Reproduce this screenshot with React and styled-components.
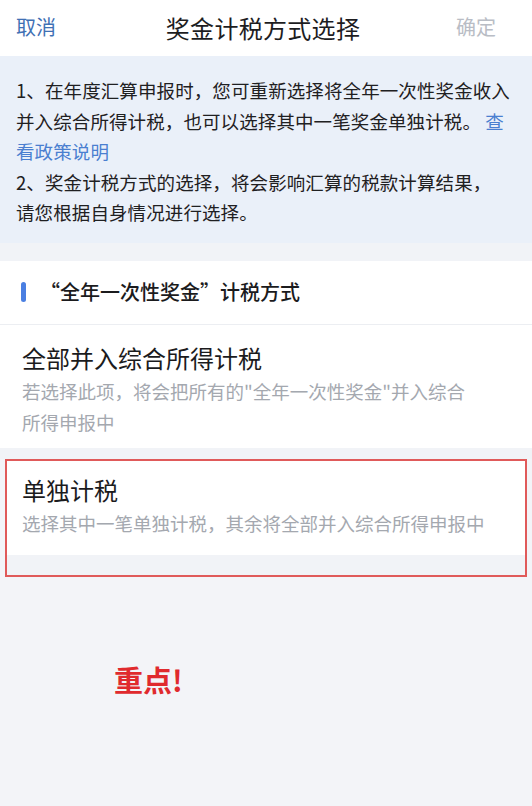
import React from 'react';
import styled, { createGlobalStyle } from 'styled-components';

const GlobalStyle = createGlobalStyle`
  html, body {
    margin: 0;
    padding: 0;
    background: #f3f4f8;
  }
  body {
    font-family: "Noto Sans CJK SC", "Noto Sans", sans-serif;
    -webkit-font-smoothing: antialiased;
  }
`;

const Page = styled.div`
  width: 532px;
  min-height: 806px;
  background: #f3f4f8;
  display: flex;
  flex-direction: column;
`;

const Header = styled.header`
  height: 56px;
  background: #ffffff;
  display: grid;
  grid-template-columns: 1fr auto 1fr;
  align-items: center;
  padding: 0 16px;
  box-sizing: border-box;
`;

const HeaderButton = styled.span`
  font-size: 20px;
  line-height: 28px;
  color: ${(p) => (p.$muted ? '#b9bdc5' : '#3f70b4')};
  justify-self: ${(p) => (p.$right ? 'end' : 'start')};
  padding-right: ${(p) => (p.$right ? '20px' : '0')};
  margin-top: -2px;
`;

const Title = styled.h1`
  margin: 0;
  font-size: 24px;
  line-height: 30px;
  font-weight: 400;
  color: #1d1d1f;
  padding-right: 6px;
  letter-spacing: 0.3px;
`;

const Notice = styled.section`
  background: #eaf0f9;
  padding: 19px 10px 15px 16px;
`;

const NoticeLine = styled.div`
  font-size: 18.5px;
  line-height: 30.5px;
  color: #1f2022;
  letter-spacing: 0.1px;
  white-space: nowrap;
`;

const PolicyLink = styled.span`
  color: #4a7fd0;
`;

const Gap = styled.div`
  height: ${(p) => p.$h}px;
  background: #f1f3f7;
`;

const SectionHead = styled.div`
  height: 63px;
  background: #ffffff;
  display: flex;
  align-items: center;
  gap: 14px;
  padding: 0 21px;
  border-bottom: 1px solid #eceef2;
`;

const Bar = styled.span`
  width: 5px;
  height: 20px;
  border-radius: 3px;
  background: #4a7fe2;
`;

const SectionTitle = styled.h2`
  margin: 0;
  font-size: 20px;
  line-height: 28px;
  font-weight: 500;
  color: #1b1b1d;
`;

const Option = styled.div`
  background: #ffffff;
  padding: ${(p) => p.$pad};
`;

const OptionTitle = styled.div`
  font-size: 24px;
  line-height: 34px;
  color: #1b1b1d;
`;

const OptionDesc = styled.div`
  margin-top: 1px;
  font-size: 18.5px;
  line-height: 31px;
  color: #a4a8af;
  white-space: pre-line;
`;

const Highlight = styled.div`
  margin: 0 5px;
  border: 2px solid #e05a5a;
  padding-bottom: 20px;
  background: #f1f3f7;
`;

const Note = styled.div`
  padding: 84px 0 0 114px;
  font-size: 29px;
  line-height: 36px;
  font-weight: 700;
  color: #e02a2e;
`;

const options = [
  {
    title: '全部并入综合所得计税',
    desc: '若选择此项，将会把所有的"全年一次性奖金"并入综合\n所得申报中',
  },
  {
    title: '单独计税',
    desc: '选择其中一笔单独计税，其余将全部并入综合所得申报中',
  },
];

const App = () => {
  return (
    <Page>
      <GlobalStyle />
      <Header>
        <HeaderButton>取消</HeaderButton>
        <Title>奖金计税方式选择</Title>
        <HeaderButton $muted $right>确定</HeaderButton>
      </Header>

      <Notice>
        <NoticeLine>1、在年度汇算申报时，您可重新选择将全年一次性奖金收入</NoticeLine>
        <NoticeLine>
          并入综合所得计税，也可以选择其中一笔奖金单独计税。 <PolicyLink>查</PolicyLink>
        </NoticeLine>
        <NoticeLine>
          <PolicyLink>看政策说明</PolicyLink>
        </NoticeLine>
        <NoticeLine>2、奖金计税方式的选择，将会影响汇算的税款计算结果，</NoticeLine>
        <NoticeLine>请您根据自身情况进行选择。</NoticeLine>
      </Notice>
      <Gap $h={18} />

      <SectionHead>
        <Bar />
        <SectionTitle>“全年一次性奖金”计税方式</SectionTitle>
      </SectionHead>

      <Option $pad="16px 16px 10px 22px">
        <OptionTitle>{options[0].title}</OptionTitle>
        <OptionDesc>{options[0].desc}</OptionDesc>
      </Option>
      <Gap $h={11} />

      <Highlight>
        <Option $pad="12px 14px 16px 15px">
          <OptionTitle>{options[1].title}</OptionTitle>
          <OptionDesc>{options[1].desc}</OptionDesc>
        </Option>
      </Highlight>

      <Note>重点!</Note>
    </Page>
  );
};

export default App;
